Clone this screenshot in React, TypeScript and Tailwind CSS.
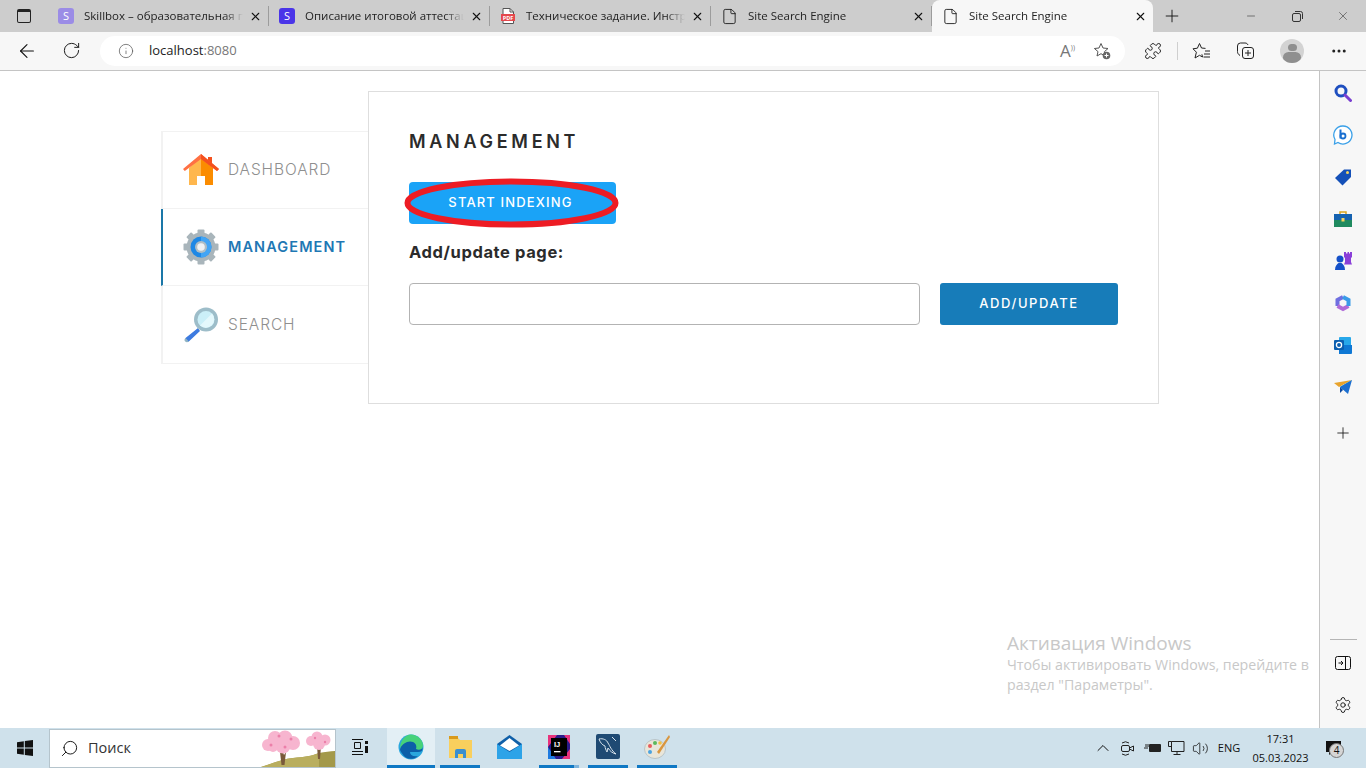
import {
  ArrowLeft,
  ChevronUp,
  Ellipsis,
  File,
  Info,
  Minus,
  Plus,
  Puzzle,
  RotateCw,
  Search,
  Settings,
  Volume2,
  X,
} from "lucide-react";
import type { ReactNode } from "react";

function TabIcon({ kind }: { kind: string }) {
  if (kind === "skillbox") {
    return (
      <span className="flex h-4 w-4 shrink-0 items-center justify-center rounded-[3px] bg-[#9b8ce6] text-[11px] text-white">
        S
      </span>
    );
  }
  if (kind === "stepik") {
    return (
      <span className="flex h-4 w-4 shrink-0 items-center justify-center rounded-[3px] bg-[#4a35e8] text-[11px] text-white">
        S
      </span>
    );
  }
  if (kind === "pdf") {
    return (
      <svg width="16" height="16" viewBox="0 0 16 16" className="shrink-0">
        <path d="M3 .5h7l3.5 3.5v11.5H3z" fill="#fff" stroke="#555" />
        <path d="M10 .5V4h3.5" fill="none" stroke="#555" />
        <rect x="1" y="6" width="14" height="7" fill="#e5484d" />
        <text x="8" y="11.5" fontSize="5.5" fontWeight="700" fill="#fff" textAnchor="middle">
          PDF
        </text>
      </svg>
    );
  }
  return <File size={17} strokeWidth={1.2} className="shrink-0 text-[#111]" />;
}

function Tab({ kind, title, active }: { kind: string; title: string; active?: boolean }) {
  return (
    <div
      className={`flex h-[32px] w-[221px] shrink-0 items-center pl-[10px] pr-[9px] ${
        active
          ? "rounded-t-lg bg-[#f7f7f7]"
          : "border-r border-[#9c9c9c] [border-image:linear-gradient(transparent_20%,#9c9c9c_20%,#9c9c9c_80%,transparent_80%)_1]"
      }`}
    >
      <TabIcon kind={kind} />
      <span className="ml-[10px] w-[159px] overflow-hidden whitespace-nowrap text-[11.5px] text-[#222] [mask-image:linear-gradient(to_right,#000_88%,transparent)]">
        {title}
      </span>
      <X size={13} strokeWidth={2} className="ml-auto translate-x-[3px] shrink-0 text-[#111]" />
    </div>
  );
}

function TabStrip() {
  return (
    <div className="flex h-[32px] items-stretch bg-[#cdcdcd]">
      <div className="flex w-[48px] shrink-0 items-center pl-[17px]">
        <div className="h-[14px] w-[14px] rounded-[2px] border border-[#222] border-t-[3px]" />
      </div>
      <Tab kind="skillbox" title="Skillbox – образовательная платформа" />
      <Tab kind="stepik" title="Описание итоговой аттестации" />
      <Tab kind="pdf" title="Техническое задание. Инструкция" />
      <Tab kind="doc" title="Site Search Engine" />
      <Tab kind="doc" title="Site Search Engine" active />
      <div className="flex w-[38px] shrink-0 items-center justify-center">
        <Plus size={20} strokeWidth={1.1} className="text-[#111]" />
      </div>
      <div className="ml-auto flex items-center text-[#333]">
        <div className="flex w-[46px] justify-center">
          <Minus size={12} strokeWidth={1.2} />
        </div>
        <div className="flex w-[46px] justify-center">
          <svg width="11" height="11" viewBox="0 0 11 11" fill="none" stroke="currentColor">
            <rect x="0.5" y="2.5" width="8" height="8" rx="1.5" />
            <path d="M3 .5h5.5a2 2 0 0 1 2 2V8" />
          </svg>
        </div>
        <div className="flex w-[46px] justify-center">
          <X size={14} strokeWidth={1} />
        </div>
      </div>
    </div>
  );
}

function ToolbarButton({ w, children }: { w: string; children: ReactNode }) {
  return <div className={`flex shrink-0 items-center justify-center ${w}`}>{children}</div>;
}

function Toolbar() {
  return (
    <div className="flex h-[39px] items-center border-b border-[#c4c4c4] bg-[#f7f7f7] pb-[1px]">
      <ToolbarButton w="w-[54px]">
        <ArrowLeft size={22} strokeWidth={1.2} className="text-[#111]" />
      </ToolbarButton>
      <ToolbarButton w="w-[34px]">
        <RotateCw size={19} strokeWidth={1.2} className="text-[#111]" />
      </ToolbarButton>
      <div className="ml-[12px] flex h-[30px] w-[1025px] items-center rounded-full bg-white pl-[18px] pr-[14px]">
        <Info size={16} strokeWidth={1.1} className="text-[#555]" />
        <span className="ml-[15px] text-[13px] text-[#222]">
          localhost<span className="text-[#777]">:8080</span>
        </span>
        <span className="ml-auto flex items-center gap-[18px] text-[#777]">
          <span className="text-[17px] leading-none">
            A<span className="align-super text-[7px]">))</span>
          </span>
          <svg width="18" height="18" viewBox="0 0 18 18" fill="none" stroke="#555" strokeWidth="1">
            <path d="M8 1.5 10 6l5 .5-3.6 3.2L12 14l-4-2.3L4 14l1-4.4L1.4 6.5 6 6z" />
            <circle cx="13.5" cy="13.5" r="3.8" fill="#666" stroke="none" />
            <path d="M13.5 11.5v4M11.5 13.5h4" stroke="#fff" />
          </svg>
        </span>
      </div>
      <ToolbarButton w="ml-[4px] w-[48px]">
        <Puzzle size={18} strokeWidth={1.2} className="text-[#111]" />
      </ToolbarButton>
      <div className="h-[18px] w-px bg-[#cfcfcf]" />
      <ToolbarButton w="w-[47px]">
        <svg width="19" height="18" viewBox="0 0 19 18" fill="none" stroke="#222" strokeWidth="1">
          <path d="M7.5 1.5 9.5 6l4 .4M1 6.8l4.4-.6M4.4 10.2 3 16l4.500-2.700 3 1.700-.6-2.700M1 6.800l3.400 3.400M7.500 1.500 5.400 6.200" />
          <path d="M13 9h5M12 12h6M11.5 15h6.5" />
        </svg>
      </ToolbarButton>
      <ToolbarButton w="w-[41px]">
        <svg width="19" height="19" viewBox="0 0 19 19" fill="none" stroke="#222" strokeWidth="1">
          <rect x="6.5" y="6.5" width="11" height="11" rx="2.5" />
          <path d="M12 9v6M9 12h6M4 14.5c-1.5-1-2.5-2-2.5-4V5a3 3 0 0 1 3-3H9c1.500 0 2.500.7 3 2" />
        </svg>
      </ToolbarButton>
      <ToolbarButton w="w-[52px]">
        <div className="flex h-[24px] w-[24px] flex-col items-center overflow-hidden rounded-full bg-[#d3d3d3]">
          <div className="mt-[5px] h-[9px] w-[9px] rounded-full bg-[#8f8f8f]" />
          <div className="mt-[1px] h-[12px] w-[18px] rounded-full bg-[#8f8f8f]" />
        </div>
      </ToolbarButton>
      <ToolbarButton w="w-[41px]">
        <Ellipsis size={18} strokeWidth={2} className="text-[#222]" />
      </ToolbarButton>
    </div>
  );
}

function HomeIcon() {
  return (
    <svg width="36" height="32" viewBox="0 0 36 32">
      <path d="M6 14 18 3l12 11v17H22v-9h-8v9H6z" fill="#ffb74d" />
      <path d="M18 3l12 11v17H22v-9h-4z" fill="#fb8c00" />
      <rect x="25" y="3" width="4" height="8" fill="#f4511e" />
      <path d="M18 0 0 15l1.800 2L18 5l16 12 2-2z" fill="#ff7043" />
      <path d="M18 0 36 15l-2 2L18 5z" fill="#f4511e" />
    </svg>
  );
}

function GearIcon() {
  return (
    <svg width="36" height="36" viewBox="0 0 36 36">
      <g fill="#a9b5bb">
        <circle cx="18" cy="18" r="14.5" />
        {[0, 45, 90, 135, 180, 225, 270, 315].map((a) => (
          <rect key={a} x="14.5" y="0.5" width="7" height="7" rx="1" transform={`rotate(${a} 18 18)`} />
        ))}
      </g>
      <circle cx="18" cy="18" r="10.5" fill="#1e88e5" />
      <path d="M18 7.500a10.500 10.500 0 0 1 0 21z" fill="#42a5f5" />
      <circle cx="18" cy="18" r="6" fill="#b0bec5" />
      <circle cx="18" cy="18" r="3.8" fill="#eef2f4" />
    </svg>
  );
}

function SearchIcon() {
  return (
    <svg width="36" height="36" viewBox="0 0 36 36">
      <path d="M15 21 2.500 31a2.500 2.500 0 0 0 3.300 3.500L17 24z" fill="#3d7be0" />
      <path d="M2.500 31l3.300 3.500a2.500 2.500 0 0 1-4-.5c-.6-1-.3-2.200.7-3z" fill="#90b4c4" />
      <circle cx="23" cy="12.5" r="12" fill="#9dbdc9" />
      <circle cx="23" cy="12.5" r="8.5" fill="#cbeff8" />
      <path d="M17 18.500a8.500 8.500 0 0 0 12-12z" fill="#e4f8fc" />
    </svg>
  );
}

function NavItem({
  icon,
  label,
  active,
}: {
  icon: ReactNode;
  label: string;
  active?: boolean;
}) {
  return (
    <div
      className={`flex h-[77px] items-center border-b border-[#f2f2f2] last:border-b-0 ${
        active ? "border-l-2 border-l-[#1a77a8] pl-[20px]" : "border-l-2 border-l-[#f2f2f2] pl-[20px]"
      }`}
    >
      <div className="flex w-[36px] justify-center">{icon}</div>
      <span
        className={`ml-[9px] font-['Inter',sans-serif] ${
          active
            ? "text-[14.5px] font-semibold tracking-[1.1px] text-[#1f78b4]"
            : "text-[15.5px] font-light tracking-[0.9px] text-[#8f8f8f]"
        }`}
      >
        {label}
      </span>
    </div>
  );
}

function PageContent() {
  return (
    <div className="relative flex min-w-0 flex-1 items-start bg-white pl-[161px] pt-[20px]">
      <div className="mt-[40px] w-[207px] shrink-0 border-y border-[#f2f2f2]">
        <NavItem icon={<HomeIcon />} label="DASHBOARD" />
        <NavItem icon={<GearIcon />} label="MANAGEMENT" active />
        <NavItem icon={<SearchIcon />} label="SEARCH" />
      </div>
      <div className="h-[313px] w-[791px] shrink-0 border border-[#dedede] px-[40px] pt-[38px]">
        <h2 className="font-['Inter',sans-serif] text-[18px] font-semibold leading-[24px] tracking-[3.7px] text-[#2b2b2b]">
          MANAGEMENT
        </h2>
        <div className="relative mt-[28px] w-[207px]">
          <button className="flex h-[42px] w-[207px] items-center justify-center rounded-[4px] bg-[#1aa3f7] pr-[4px] font-['Inter',sans-serif] text-[13px] font-medium tracking-[1.15px] text-white">
            START INDEXING
          </button>
          <svg width="216" height="52" viewBox="0 0 216 52" className="absolute -left-[5px] -top-[5px]">
            <ellipse cx="107.5" cy="26" rx="104" ry="21.5" fill="none" stroke="#ed1c24" strokeWidth="6" />
          </svg>
        </div>
        <div className="mt-[16px] font-['Inter',sans-serif] text-[16.5px] font-bold leading-[24px] tracking-[0.6px] text-[#2b2b2b]">
          Add/update page:
        </div>
        <div className="mt-[19px] flex items-center">
          <input className="h-[42px] w-[511px] rounded-[4px] border border-[#b3b3b3] bg-white" />
          <button className="ml-[20px] flex h-[42px] w-[178px] items-center justify-center rounded-[3px] bg-[#177cb9] font-['Inter',sans-serif] text-[13px] font-medium tracking-[1.6px] text-white">
            ADD/UPDATE
          </button>
        </div>
      </div>
      <div className="absolute left-[1007px] top-[560px] w-[310px] text-[#c8c8c8]">
        <div className="text-[19px] leading-[24px]">Активация Windows</div>
        <div className="text-[14.2px] leading-[20px]">
          Чтобы активировать Windows, перейдите в
          <br />
          раздел "Параметры".
        </div>
      </div>
    </div>
  );
}

function SideIcon({ children }: { children: ReactNode }) {
  return <div className="flex h-[42px] items-center justify-center">{children}</div>;
}

function SideBar() {
  return (
    <div className="flex w-[47px] shrink-0 flex-col border-l border-[#c4c4c4] bg-[#f7f7f7] pt-[1px]">
      <SideIcon>
        <svg width="18" height="18" viewBox="0 0 18 18" fill="none">
          <circle cx="7" cy="7" r="5" stroke="#1f4fc0" strokeWidth="3" />
          <path d="m11 11 5.500 5.500" stroke="#7a3fd0" strokeWidth="3" strokeLinecap="round" />
        </svg>
      </SideIcon>
      <SideIcon>
        <svg width="20" height="20" viewBox="0 0 20 20">
          <path d="M10 1a9 9 0 1 1-5 16.500L1.500 19 2 14.500A9 9 0 0 1 10 1z" fill="#fff" stroke="#3aa0e8" strokeWidth="1.3" />
          <path d="M7.500 4.500v9" fill="none" stroke="#1a6fd0" strokeWidth="2" />
          <circle cx="10" cy="11" r="2.5" fill="none" stroke="#1a6fd0" strokeWidth="1.8" />
        </svg>
      </SideIcon>
      <SideIcon>
        <svg width="18" height="18" viewBox="0 0 18 18">
          <path d="M1 10 10 1.500h7V9l-8.500 8.500z" fill="#1450b8" />
          <circle cx="13.5" cy="4.5" r="1.5" fill="#f4d35e" />
        </svg>
      </SideIcon>
      <SideIcon>
        <svg width="18" height="16" viewBox="0 0 18 16">
          <path d="M6 3V1h6v2" fill="none" stroke="#d9a520" strokeWidth="1.5" />
          <rect y="3" width="18" height="6" fill="#1562b0" />
          <rect y="9" width="18" height="7" fill="#1f8a5f" />
          <rect x="7.5" y="7" width="3" height="3.5" fill="#f4d35e" />
        </svg>
      </SideIcon>
      <SideIcon>
        <svg width="18" height="20" viewBox="0 0 18 20">
          <circle cx="6" cy="8" r="3.5" fill="#1450c8" />
          <path d="M1 19c0-4 2-6 3.500-7h3C9 13 11 15 11 19z" fill="#1450c8" />
          <path d="M10 1h2v1.500h1.500V1h1.500v1.500h1V1H18v5l-1 1v4l1 2.500h-8L11 11V7l-1-1z" fill="#8a3fd8" />
        </svg>
      </SideIcon>
      <SideIcon>
        <svg width="18" height="18" viewBox="0 0 18 18" fill="none" strokeWidth="4">
          <path d="M9 3 3.500 6v6" stroke="#6f6fe0" />
          <path d="M3.500 12 9 15l5.500-3" stroke="#b06bd8" />
          <path d="M14.500 12V6L9 3" stroke="#3a9be8" />
        </svg>
      </SideIcon>
      <SideIcon>
        <svg width="18" height="17" viewBox="0 0 18 17">
          <rect x="5" y="0" width="12" height="16" rx="1" fill="#28a8ea" />
          <path d="M5 8h13v8a1 1 0 0 1-1 1H5z" fill="#0f78d4" />
          <rect x="0" y="3" width="10" height="10" rx="1" fill="#0b5fb0" />
          <circle cx="5" cy="8" r="2.6" fill="none" stroke="#fff" strokeWidth="1.3" />
        </svg>
      </SideIcon>
      <SideIcon>
        <svg width="18" height="14" viewBox="0 0 18 14">
          <path d="M0 3 18 0 5 7z" fill="#e8a32c" />
          <path d="M18 0 6 7l3 3z" fill="#28a8d8" />
          <path d="M18 0 14 14 6 7z" fill="#1c6fd0" />
          <path d="M6 7v6l3-3z" fill="#0f4aa0" />
        </svg>
      </SideIcon>
      <div className="flex h-[50px] items-center justify-center">
        <Plus size={18} strokeWidth={1.1} className="text-[#111]" />
      </div>
      <div className="mx-auto mt-[181px] h-px w-[27px] bg-[#b5b5b5]" />
      <div className="mt-[2px] flex h-[42px] items-center justify-center">
        <svg width="16" height="14" viewBox="0 0 16 14" fill="none" stroke="#111">
          <rect x="0.5" y="0.5" width="15" height="13" rx="2" />
          <path d="M10.500 .5v13M3.500 7h4M6 5l2 2-2 2" />
        </svg>
      </div>
      <div className="flex h-[42px] items-center justify-center">
        <Settings size={18} strokeWidth={1.2} className="text-[#111]" />
      </div>
    </div>
  );
}

function TaskIcon({
  w,
  bar,
  active,
  children,
}: {
  w: string;
  bar?: string;
  active?: boolean;
  children: ReactNode;
}) {
  return (
    <div
      className={`flex h-[40px] shrink-0 items-center justify-center border-b-[3px] ${w} ${
        bar ?? "border-b-transparent"
      } ${active ? "bg-[#e3eff5]" : ""}`}
    >
      {children}
    </div>
  );
}

function Taskbar() {
  const fullBar = "border-b-[#0f78c4]";
  return (
    <div className="flex h-[40px] items-center bg-[#cfe1eb]">
      <div className="flex w-[49px] shrink-0 justify-center">
        <svg width="16" height="16" viewBox="0 0 16 16" fill="#111">
          <path d="M0 2.200 6.800 1.200v6.300H0zM7.800 1 16 0v7.500H7.800zM0 8.500h6.800v6.300L0 13.800zM7.800 8.500H16V16l-8.200-1.100z" />
        </svg>
      </div>
      <div className="flex h-[39px] w-[287px] shrink-0 items-center overflow-hidden border border-[#b5c4cc] bg-white pl-[10px]">
        <Search size={19} strokeWidth={1.2} className="-scale-x-100 text-[#111]" />
        <span className="ml-[9px] text-[14.5px] text-[#333]">Поиск</span>
        <svg width="74" height="37" viewBox="0 0 74 37" className="ml-auto">
          <path d="M0 37c12-4 22-8 32-9 12-1 18-2 26-5 6-1 11-2 16-2v16z" fill="#a3994a" />
          <path d="M0 37c12-4 22-8 32-9 12-1 18-2 26-5v14z" fill="#b9ae5e" />
          <path d="M19 22l1.500 13h3L25 22l-2 3-1-3zM56 16l1 13h2l1-13z" fill="#7a5a3a" />
          <g fill="#f7b5cf">
            <circle cx="7" cy="15" r="6" />
            <circle cx="14" cy="8" r="7" />
            <circle cx="24" cy="8" r="7.5" />
            <circle cx="32" cy="13" r="7" />
            <circle cx="22" cy="16" r="7.5" />
            <circle cx="12" cy="17" r="5" />
            <circle cx="50" cy="11" r="5" />
            <circle cx="56" cy="7" r="5.5" />
            <circle cx="64" cy="10" r="5.5" />
            <circle cx="58" cy="14" r="6" />
          </g>
          <g fill="#ec7fa9">
            <circle cx="10" cy="15" r="1.5" />
            <circle cx="18" cy="6" r="1.5" />
            <circle cx="30" cy="9" r="1.5" />
            <circle cx="24" cy="17" r="1.5" />
            <circle cx="54" cy="8" r="1.2" />
            <circle cx="64" cy="12" r="1.2" />
          </g>
        </svg>
      </div>
      <TaskIcon w="w-[51px] pr-[3px]">
        <svg width="18" height="16" viewBox="0 0 18 16" fill="none" stroke="#111">
          <path d="M1 .5h11M1 15.500h11M1 12.500h11M3.500 3.500h6v6h-6z" />
          <rect x="14" y="2" width="3" height="3" fill="#111" stroke="none" />
          <rect x="14" y="7" width="3" height="7" fill="#111" stroke="none" />
        </svg>
      </TaskIcon>
      <TaskIcon w="w-[48px]" bar={fullBar} active>
        <svg width="26" height="26" viewBox="0 0 26 26">
          <circle cx="13" cy="13" r="12.5" fill="#2aa7dd" />
          <path d="M2 16C3 7 10 3.500 15 5c6 1.500 9.500 6 9.500 10 0 2-1.500 3-4.500 3H12c0 3 3 5 8 4-5 4.500-13 3.500-15.500-2C3 18 2.500 17 2 16z" fill="#0c5fa8" />
          <path d="M13 .5c6 0 12 5 12 11 0 4-4 5-7 3.500 1.500-4-1.500-7.500-6-7.500-4 0-8 3-10 7C2 7 7 .5 13 .5z" fill="#47d27a" />
        </svg>
      </TaskIcon>
      <div className="w-[5px] shrink-0" />
      <TaskIcon w="w-[40px]" bar={fullBar}>
        <svg width="23" height="22" viewBox="0 0 23 22">
          <path d="M0 2h9l2 2h12v18H0z" fill="#f9cf5d" />
          <path d="M0 0h9v3H0z" fill="#d99a1c" />
          <path d="M6 15a2 2 0 0 1 2-2h7a2 2 0 0 1 2 2v7h-3v-4H9v4H6z" fill="#3a8fd0" />
        </svg>
      </TaskIcon>
      <div className="w-[9px] shrink-0" />
      <TaskIcon w="w-[40px]">
        <svg width="25" height="24" viewBox="0 0 25 24">
          <path d="M12.500 0 25 9v15H0V9z" fill="#0f5fa8" />
          <path d="M3 10.500 12.500 3 22 10.500 12.500 16z" fill="#ffffff" />
          <path d="M0 9l12.500 8L25 9v15H0z" fill="#2da3e8" />
        </svg>
      </TaskIcon>
      <div className="w-[10px] shrink-0" />
      <TaskIcon w="w-[40px]" bar="[border-image:linear-gradient(to_right,#0f78c4_85%,#7fb4dc_85%)_1]">
        <svg width="22" height="24" viewBox="0 0 22 24">
          <rect width="22" height="24" fill="#2b1a8a" />
          <path d="M0 0h9L0 12zM22 0v9l-6-9zM22 24h-8l8-10z" fill="#e8327c" />
          <path d="M0 24V12l8 12z" fill="#1d7ae0" />
          <rect x="3" y="3" width="16" height="18" fill="#000" />
          <text x="6" y="11.5" fontSize="7.5" fontWeight="700" fill="#fff" fontFamily="'Liberation Sans',sans-serif">
            IJ
          </text>
          <rect x="6" y="16" width="6.5" height="1.3" fill="#fff" />
        </svg>
      </TaskIcon>
      <div className="w-[9px] shrink-0" />
      <TaskIcon w="w-[40px]" bar={fullBar}>
        <svg width="24" height="25" viewBox="0 0 24 25" fill="none">
          <rect width="24" height="25" rx="2" fill="#1f4a73" />
          <path d="M3 5c4-1 8 1 9 4 2 3 3 7 8 11-4-1-6-3-8-6l-1 4c-1-2-2-4-2-6-3-1-5-4-6-7zM16 3l4 4" stroke="#d7e3ec" strokeWidth="1" />
        </svg>
      </TaskIcon>
      <div className="w-[9px] shrink-0" />
      <TaskIcon w="w-[40px]" bar={fullBar}>
        <svg width="26" height="26" viewBox="0 0 26 26">
          <ellipse cx="11" cy="15" rx="10.5" ry="9.5" fill="#e9e6da" stroke="#b9c4c8" />
          <circle cx="6" cy="12" r="2" fill="#e85d5d" />
          <circle cx="11" cy="9" r="2" fill="#5cb85c" />
          <circle cx="6" cy="18" r="2" fill="#4aa3e0" />
          <circle cx="16" cy="9" r="1.8" fill="#f0c040" />
          <path d="M25 1 13 18l2 2L26 3z" fill="#d9963f" />
        </svg>
      </TaskIcon>
      <div className="ml-auto flex items-center pr-[13px] text-[#111]">
        <div className="flex w-[24px] justify-center">
          <ChevronUp size={20} strokeWidth={1.2} />
        </div>
        <div className="flex w-[25px] justify-center">
          <svg width="15" height="17" viewBox="0 0 15 17" fill="none" stroke="#222">
            <path d="M2 3a6 6 0 0 1 7 0M2 14a6 6 0 0 0 7 0" />
            <rect x="1.5" y="5.5" width="8" height="6" rx="1.5" />
            <path d="m9.500 8 4-2v5l-4-2" />
          </svg>
        </div>
        <div className="flex w-[24px] justify-center">
          <svg width="17" height="12" viewBox="0 0 17 12">
            <rect x="5" y="2" width="12" height="8" rx="1" fill="#222" />
            <path d="M0 6h4M2 2v3M4 2v3" stroke="#222" fill="none" />
          </svg>
        </div>
        <div className="flex w-[24px] justify-center">
          <svg width="17" height="16" viewBox="0 0 17 16" fill="none" stroke="#222">
            <path d="M3.500 1.500H16v10H3.500zM.5 1.500h3v5h-3zM9 11.500v3M5.500 14.500h7" />
          </svg>
        </div>
        <div className="flex w-[24px] justify-center">
          <Volume2 size={17} strokeWidth={1.1} />
        </div>
        <div className="w-[34px] text-center text-[11px]">ENG</div>
        <div className="w-[69px] text-center text-[11px] leading-[19px]">
          <div>17:31</div>
          <div>05.03.2023</div>
        </div>
        <div className="relative flex w-[38px] justify-center pr-[2px]">
          <svg width="15" height="15" viewBox="0 0 15 15">
            <path d="M0 0h15v11H6l-3 3v-3H0z" fill="#111" />
          </svg>
          <span className="absolute left-[14px] top-[2px] flex h-[15px] w-[15px] items-center justify-center rounded-full border border-[#777] bg-[#d5d5d5] text-[10px] leading-none">
            4
          </span>
        </div>
      </div>
    </div>
  );
}

export default function App() {
  return (
    <div className="flex h-[768px] w-[1366px] flex-col overflow-hidden bg-white font-['Open_Sans',sans-serif]">
      <TabStrip />
      <Toolbar />
      <div className="flex min-h-0 flex-1">
        <PageContent />
        <SideBar />
      </div>
      <Taskbar />
    </div>
  );
}
